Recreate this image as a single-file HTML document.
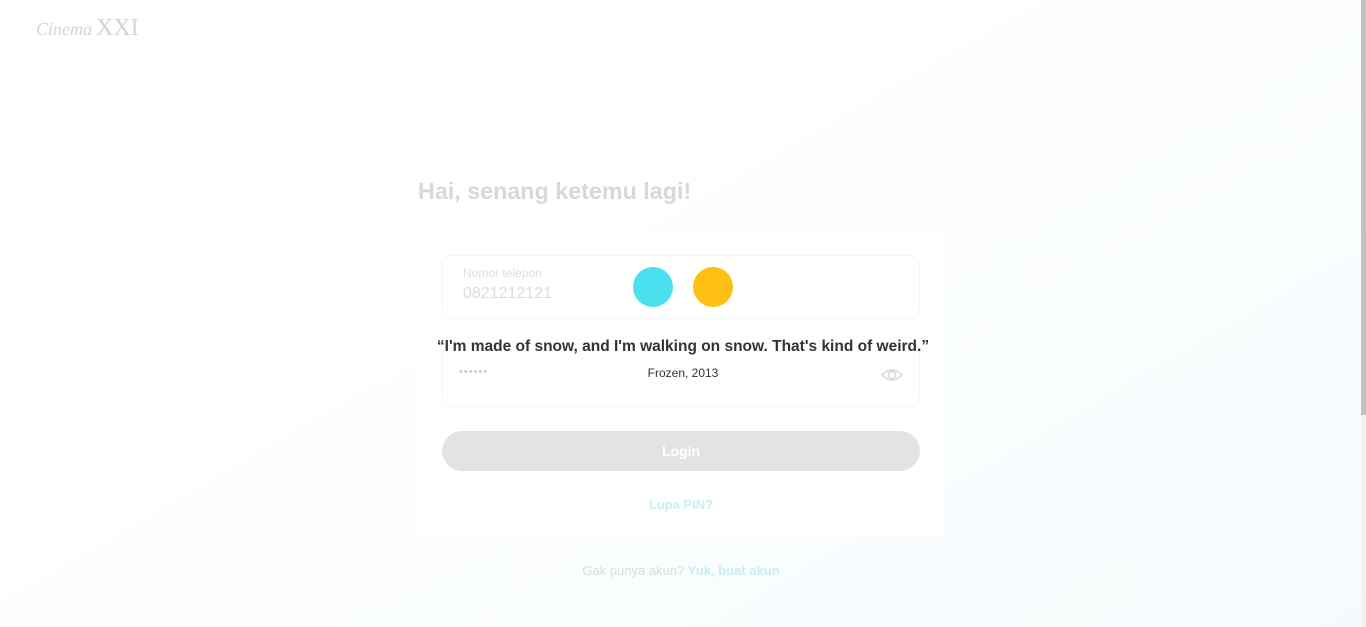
<!DOCTYPE html>
<html><head><style>
body{margin:0;width:1366px;height:627px;overflow:hidden;background:linear-gradient(150deg,#fff 35%,#f5fbfd 100%);font-family:"Liberation Sans",sans-serif;position:relative}
.a{position:absolute}
</style></head><body>
<div class="a" style="left:36px;top:15px;font-family:'Liberation Serif',serif;color:#d4d4d4"><i style="font-size:18px">Cinema</i><span style="font-size:24px;margin-left:4px">XXI</span></div>
<div class="a" style="left:418px;top:178px;font-size:23.3px;font-weight:bold;color:#d8d8d8">Hai, senang ketemu lagi!</div>
<div class="a" style="left:418px;top:232px;width:526px;height:304px;background:#fff"></div>
<div class="a" style="left:442px;top:255px;width:476px;height:62px;border:1px solid #eefafa;border-radius:10px"></div>
<div class="a" style="left:463px;top:266px;font-size:12px;color:#ddd">Nomor telepon</div>
<div class="a" style="left:463px;top:285px;font-size:16px;color:#ddd">0821212121</div>
<div class="a" style="left:442px;top:343px;width:476px;height:62px;border:1px solid #eefafa;border-radius:10px"></div>
<div class="a" style="left:459px;top:366px;font-size:11px;color:#ccc;letter-spacing:1px">••••••</div>
<svg class="a" style="left:880px;top:365px" width="24" height="20" viewBox="0 0 24 20"><path d="M2 10Q12 0 22 10Q12 20 2 10Z" fill="none" stroke="#d8d8d8" stroke-width="1.5"/><circle cx="12" cy="10" r="3.5" fill="none" stroke="#d8d8d8" stroke-width="1.5"/></svg>
<div class="a" style="left:633px;top:267px;width:40px;height:40px;border-radius:50%;background:#4ae0ef"></div>
<div class="a" style="left:693px;top:267px;width:40px;height:40px;border-radius:50%;background:#ffbf14"></div>
<div class="a" style="left:0;width:1366px;top:338px;text-align:center;font-size:15.5px;font-weight:bold;color:#333">“I'm made of snow, and I'm walking on snow. That's kind of weird.”</div>
<div class="a" style="left:0;width:1366px;top:366px;text-align:center;font-size:12px;color:#333">Frozen, 2013</div>
<div class="a" style="left:442px;top:431px;width:478px;height:40px;border-radius:20px;background:#e3e3e3;color:#fff;font-weight:bold;font-size:14px;text-align:center;line-height:40px">Login</div>
<div class="a" style="left:0;width:1362px;top:497px;text-align:center;font-size:13px;font-weight:bold;color:#c8eef2">Lupa PIN?</div>
<div class="a" style="left:0;width:1362px;top:563px;text-align:center;font-size:13px;color:#dcdcdc">Gak punya akun? <b style="color:#c8eef2">Yuk, buat akun</b></div>
<div class="a" style="left:1361px;top:0;width:5px;height:627px;background:#f1f1f1"></div>
<div class="a" style="left:1361px;top:0;width:5px;height:415px;background:#c1c1c1"></div>
</body></html>
